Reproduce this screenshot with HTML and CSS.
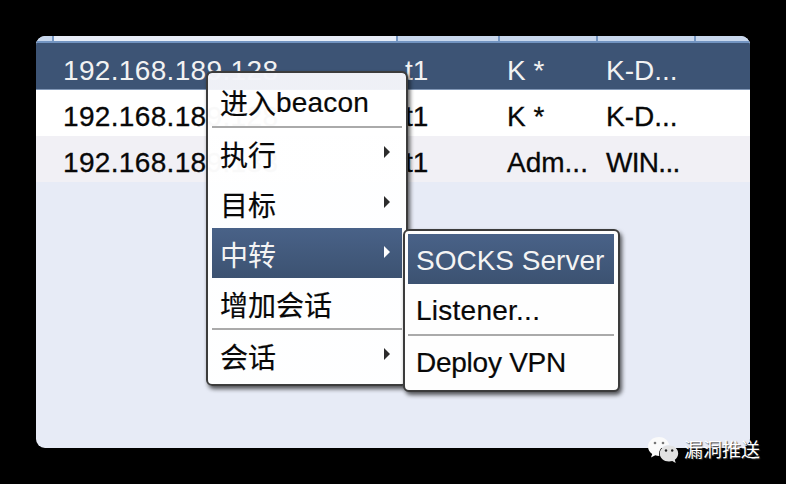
FILE: index.html
```html
<!DOCTYPE html>
<html lang="zh-CN">
<head>
<meta charset="utf-8">
<title>Sessions</title>
<link rel="stylesheet" href="styles.css">
</head>
<body>
<main class="window">
  <div class="row head"><span class="first"></span><span class="active"></span><span></span><span></span><span></span><span></span></div>
  <div class="row selected"><span></span><span class="ip">192.168.189.128</span><span>t1</span><span>K *</span><span>K-D...</span></div>
  <div class="row"><span></span><span class="ip">192.168.189.128</span><span>t1</span><span>K *</span><span>K-D...</span></div>
  <div class="row alt"><span></span><span class="ip">192.168.189.133</span><span>t1</span><span>Adm...</span><span class="host">WIN...</span></div>
</main>
<nav class="menu context">
  <div class="item enter"><span>进入</span>beacon</div>
  <hr>
  <div class="item cjk">执行<i class="arrow"></i></div>
  <div class="item cjk">目标<i class="arrow"></i></div>
  <div class="item cjk chosen">中转<i class="arrow"></i></div>
  <div class="item cjk">增加会话</div>
  <hr>
  <div class="item cjk">会话<i class="arrow"></i></div>
</nav>
<nav class="menu submenu">
  <div class="item chosen">SOCKS Server</div>
  <div class="item listener">Listener...</div>
  <hr>
  <div class="item deploy">Deploy VPN</div>
</nav>
<div class="watermark">
  <svg width="32" height="27" viewBox="0 0 32 27">
    <path fill="#fafafa" d="M11 0C4.800 0 0 4.200 0 9.500c0 3 1.600 5.600 4.200 7.400L3 20.500l4.300-2.200c1.300.4 2.500.6 4 .6-1.300-6 3.500-11.200 10-11.100C20.200 3.300 16 0 11 0z"/>
    <path fill="#e2e2e2" d="M21 8.500c-5.200 0-9.200 3.500-9.200 8s4 8 9.200 8c1.200 0 2.300-.2 3.300-.5l3.400 2-.9-3.200c2.100-1.500 3.400-3.700 3.400-6.300 0-4.500-4-8-9.200-8z"/>
    <g fill="#777"><circle cx="7" cy="6" r="1.300"/><circle cx="15" cy="6" r="1.300"/></g>
    <g fill="#222"><circle cx="18" cy="13.500" r="1.200"/><circle cx="24.200" cy="13.500" r="1.200"/></g>
  </svg>
  <span>漏洞推送</span>
</div>
</body>
</html>
```
FILE: styles.css
```css
* { box-sizing: border-box; }
body {
  margin: 0;
  width: 786px;
  height: 484px;
  padding: 36px;
  overflow: hidden;
  background: #000;
  color: #080808;
  font: 28px "Liberation Sans", "Noto Sans CJK SC", sans-serif;
}
.window {
  width: 714px;
  height: 412px;
  overflow: hidden;
  border-radius: 9px;
  background: #e7ebf6;
}
.row {
  display: grid;
  grid-template-columns: 26px 343px 102px 99px 1fr;
  height: 46px;
  line-height: 54px;
  background: #fff;
  white-space: nowrap;
  -webkit-text-stroke: .3px;
}
.ip { padding-left: 1px; letter-spacing: .34px; }
.host { letter-spacing: -.7px; }
.selected {
  height: 47px;
  line-height: 56px;
  border-bottom: 1px solid #8298b7;
  background: #3d5475;
  color: #f2f2f2;
  -webkit-text-stroke: 0;
}
.alt { background: #f1f0f5; }
.head {
  grid-template-columns: 18px 344px 102px 98px 98px 1fr;
  height: 7px;
  border-bottom: 2px solid #7294c1;
  background: #c8d7ed;
}
.head span { border-right: 2px solid #7899c5; }
.head .active { background: #e7edf8; }
.head span:last-child { border: 0; }
.menu {
  position: absolute;
  border: 2px solid #3c3c3c;
  border-radius: 6px;
  background: #fefefe;
  box-shadow: 2px 3px 4px rgba(0, 0, 0, .65);
  white-space: nowrap;
}
.context {
  left: 206px;
  top: 71px;
  width: 202px;
  height: 315px;
  padding: 3px 4px;
  background: linear-gradient(#f3f4f9f9 17px, #fffffff9 17px);
  background-clip: padding-box;
}
.submenu {
  left: 403px;
  top: 229px;
  width: 217px;
  height: 163px;
  padding: 3px 4px 3px 3px;
}
.item {
  display: flex;
  align-items: center;
  justify-content: space-between;
  height: 50px;
  padding: 3px 12px 0 8px;
  line-height: 40px;
  -webkit-text-stroke: .2px;
}
.cjk { padding-top: 8px; }
.chosen {
  background: linear-gradient(#496288, #3c5271);
  color: #f4f4f4;
  -webkit-text-stroke: 0;
}
.enter {
  justify-content: flex-start;
  padding-top: 3px;
  letter-spacing: .2px;
}
.enter span {
  padding-top: 5px;
  letter-spacing: 0;
}
.listener { letter-spacing: .25px; }
.deploy { letter-spacing: -.25px; }
.menu hr {
  height: 2px;
  margin: 0;
  border: 0;
  background: #aaa;
}
.arrow {
  border: 6px solid transparent;
  border-left: 6px solid #2c2c2c;
  border-right: 0;
  transform: translateY(-5px);
}
.chosen .arrow { border-left-color: #fff; }
.watermark {
  position: absolute;
  left: 648px;
  top: 435px;
  display: flex;
  align-items: center;
  gap: 4px;
  color: #fff;
  font-size: 19px;
  line-height: 28px;
  text-shadow: 1px 1px 1px #333;
}
.watermark span { padding-top: 2px; }
```
